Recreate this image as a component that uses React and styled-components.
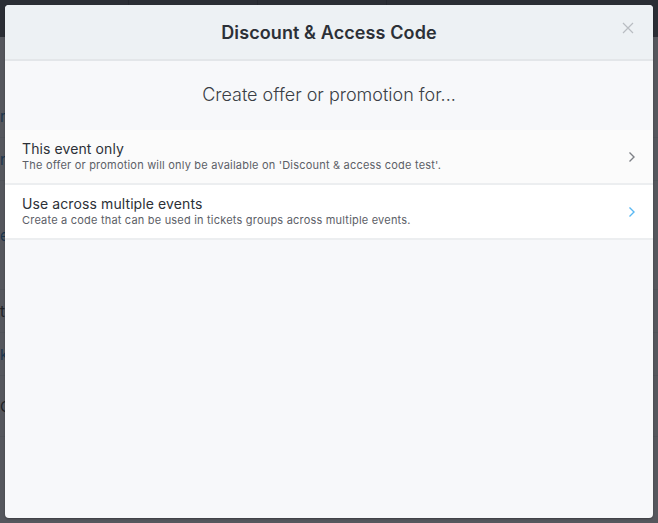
import React from 'react';
import styled, { createGlobalStyle } from 'styled-components';

const GlobalStyle = createGlobalStyle`
  html, body {
    margin: 0;
    padding: 0;
    height: 100%;
  }
  body {
    font-family: Inter, "Noto Sans", sans-serif;
    background: #f3f4f6;
    overflow: hidden;
  }
  #root {
    height: 100%;
  }
`;

// page that sits behind the modal
const Page = styled.div`
  position: relative;
  height: 523px;
  display: flex;
  flex-direction: column;
`;

const TopBar = styled.div`
  height: 37px;
  background: #5e6068;
  display: flex;
`;

const TopTab = styled.div`
  width: 128px;
  border-right: 1px solid #4a4c53;
`;

const PageBody = styled.div`
  flex: 1;
  background: #f4f5f7;
  padding-top: 58px;
`;

const PageRow = styled.div`
  border-bottom: 1px solid #e2e4e8;
  height: ${p => p.h || 42}px;
  display: flex;
  align-items: center;
  color: ${p => (p.link ? '#2a7bc0' : '#333')};
  font-size: 15px;
  white-space: nowrap;
  overflow: hidden;
`;

const Backdrop = styled.div`
  position: absolute;
  inset: 0;
  background: rgba(23, 26, 33, 0.72);
`;

const Modal = styled.div`
  position: absolute;
  left: 5px;
  top: 5px;
  width: 648px;
  height: 513px;
  background: #f7f8fa;
  border-radius: 4px;
  overflow: hidden;
  display: flex;
  flex-direction: column;
  box-shadow: 0 1px 2px rgba(0, 0, 0, 0.3);
`;

const Header = styled.div`
  position: relative;
  height: 54px;
  flex-shrink: 0;
  background: #edf1f4;
  border-bottom: 2px solid #e3e6e9;
  display: flex;
  align-items: center;
  justify-content: center;
`;

const Title = styled.h2`
  margin: 0;
  font-size: 18px;
  font-weight: 600;
  color: #2c3037;
  letter-spacing: 0.1px;
`;

const Close = styled.button`
  position: absolute;
  right: 18px;
  top: 16px;
  width: 14px;
  height: 14px;
  padding: 0;
  border: none;
  background: none;
  display: flex;
  align-items: center;
  justify-content: center;
`;

const Lead = styled.div`
  height: 69px;
  display: flex;
  align-items: center;
  justify-content: center;
  font-size: 18px;
  font-weight: 300;
  color: #3a3e45;
  padding-bottom: 2px;
  box-sizing: border-box;
`;

const Option = styled.div`
  display: flex;
  align-items: center;
  justify-content: space-between;
  height: 53px;
  padding: 0 17px;
  background: ${p => (p.active ? '#ffffff' : '#fbfbfb')};
  border-bottom: 2px solid #eceef0;
  cursor: pointer;
`;

const OptionText = styled.div`
  display: flex;
  flex-direction: column;
  gap: 1px;
  padding-bottom: 2px;
`;

const OptionTitle = styled.div`
  font-size: 14px;
  line-height: 17px;
  color: #2c3037;
  letter-spacing: 0.1px;
`;

const OptionSub = styled.div`
  font-size: 11px;
  line-height: 14px;
  color: #5c6067;
  letter-spacing: 0.2px;
`;

const Chevron = ({ color }) => (
  <svg width="8" height="12" viewBox="0 0 8 12">
    <path d="M1.5 1.5 L6 6 L1.5 10.5" fill="none" stroke={color} strokeWidth="1.4" />
  </svg>
);

export default function App() {
  return (
    <>
      <GlobalStyle />
      <Page>
        <TopBar>
          <TopTab />
          <TopTab />
          <TopTab />
        </TopBar>
        <PageBody>
          <PageRow link>r</PageRow>
          <PageRow link>n</PageRow>
          <PageRow h={108} link>e</PageRow>
          <PageRow>t</PageRow>
          <PageRow link>k</PageRow>
          <PageRow h={60}>O</PageRow>
        </PageBody>
        <Backdrop />
        <Modal>
          <Header>
            <Title>Discount &amp; Access Code</Title>
            <Close aria-label="Close">
              <svg width="12" height="12" viewBox="0 0 12 12">
                <path d="M1 1 L11 11 M11 1 L1 11" stroke="#b9bdc2" strokeWidth="1.2" />
              </svg>
            </Close>
          </Header>
          <Lead>Create offer or promotion for...</Lead>
          <Option>
            <OptionText>
              <OptionTitle>This event only</OptionTitle>
              <OptionSub>The offer or promotion will only be available on 'Discount &amp; access code test'.</OptionSub>
            </OptionText>
            <Chevron color="#7d8086" />
          </Option>
          <Option active>
            <OptionText>
              <OptionTitle>Use across multiple events</OptionTitle>
              <OptionSub>Create a code that can be used in tickets groups across multiple events.</OptionSub>
            </OptionText>
            <Chevron color="#5ab8f2" />
          </Option>
        </Modal>
      </Page>
    </>
  );
}
